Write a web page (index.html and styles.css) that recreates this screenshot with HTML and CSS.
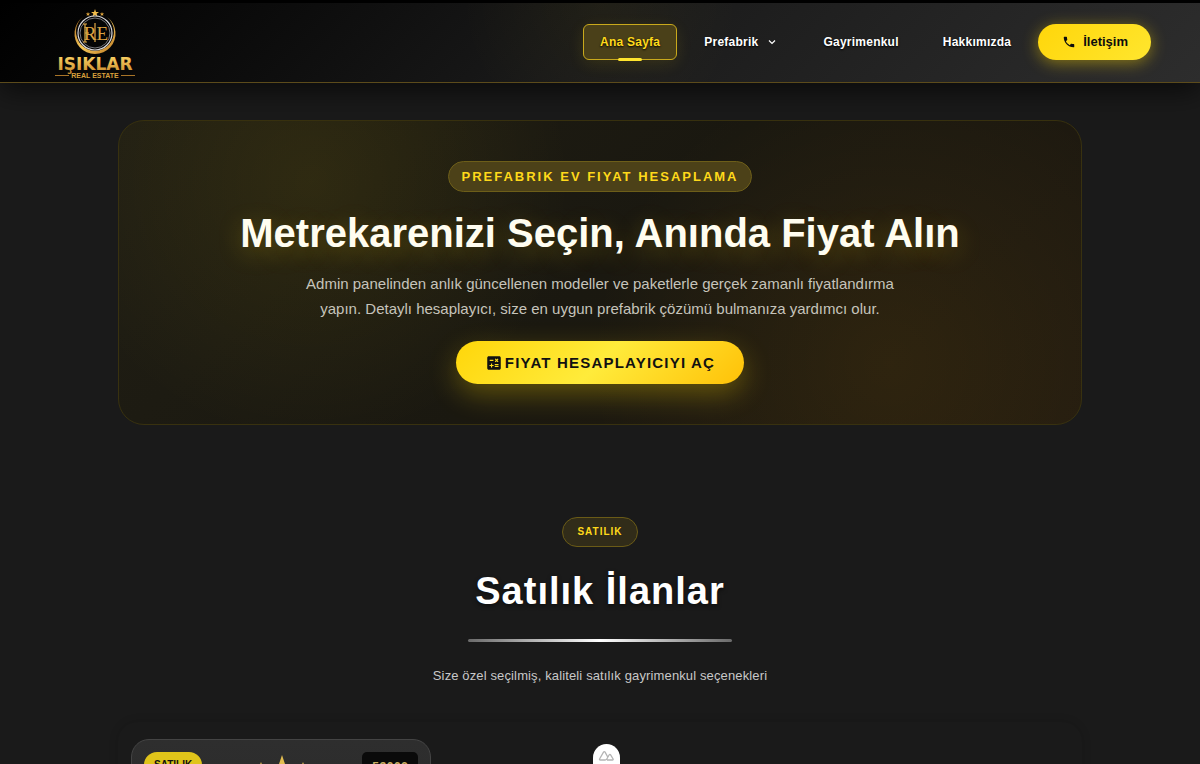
FILE: index.html
```html
<!DOCTYPE html>
<html lang="tr">
<head>
  <meta charset="UTF-8">
  <meta name="viewport" content="width=device-width, initial-scale=1.0">
  <title>Işıklar Real Estate</title>
  <link rel="stylesheet" href="styles.css">
</head>
<body>
  <header class="header">
    <a href="#" class="logo" aria-label="Işıklar Real Estate">
      <svg width="94" height="76" viewBox="0 0 94 76">
        <defs>
          <linearGradient id="gold" x1="0" y1="0" x2="1" y2="1">
            <stop offset="0" stop-color="#a8671c"/>
            <stop offset="0.5" stop-color="#f7c95a"/>
            <stop offset="1" stop-color="#b87420"/>
          </linearGradient>
          <linearGradient id="goldText" x1="0" y1="0" x2="0" y2="1">
            <stop offset="0" stop-color="#ffd96a"/>
            <stop offset="1" stop-color="#c98a2c"/>
          </linearGradient>
        </defs>
        <path fill="#f2bd4b" d="M47 5l1 3h3l-2.400 1.800 1 3-2.600-1.800-2.600 1.800 1-3L43 8h3z"/>
        <path fill="#e0a63c" d="M40 8l.6 1.500h1.600l-1.300 1 .5 1.500-1.400-.9-1.400.9.5-1.500-1.300-1h1.600zM54 8l.6 1.500h1.600l-1.300 1 .5 1.500-1.400-.9-1.400.9.5-1.500-1.300-1h1.600z"/>
        <path fill="url(#gold)" d="M35 13a20.500 20.500 0 1 0 24 0a19 19 0 1 1-24 0z"/>
        <circle cx="47" cy="29" r="17" fill="none" stroke="#d8d8dc" stroke-width="1.200"/>
        <circle cx="47" cy="29" r="15" fill="none" stroke="#77777c" stroke-width="1"/>
        <text x="48" y="36" class="logo-mono">RE</text>
        <path stroke="#e2a945" stroke-width="1.200" d="M37 20v18M35 20h4M35 38h4M37 29h4M47 19v19" fill="none"/>
        <text x="47" y="66" class="logo-name">IŞIKLAR</text>
        <text x="47" y="74" class="logo-sub">REAL ESTATE</text>
        <path stroke="#a87428" stroke-width="1" d="M7 71.500h14M73 71.500h14"/>
      </svg>
    </a>
    <nav class="nav">
      <a href="#" class="nav-link active">Ana Sayfa</a>
      <a href="#" class="nav-link">Prefabrik
        <svg class="chevron" width="14" height="14" viewBox="0 0 14 14"><path d="M4 5.500l3 3 3-3" fill="none" stroke="currentColor" stroke-width="1.200"/></svg>
      </a>
      <a href="#" class="nav-link">Gayrimenkul</a>
      <a href="#" class="nav-link">Hakkımızda</a>
      <a href="#" class="contact">
        <svg width="14" height="14" viewBox="0 0 24 24"><path fill="currentColor" d="M6.620 10.790c1.440 2.830 3.760 5.140 6.590 6.590l2.200-2.200c.27-.27.67-.36 1.020-.24 1.120.37 2.330.57 3.570.57.55 0 1 .45 1 1V20c0 .55-.45 1-1 1-9.390 0-17-7.610-17-17 0-.55.45-1 1-1h3.500c.55 0 1 .45 1 1 0 1.250.2 2.450.57 3.570.11.35.03.74-.25 1.020l-2.200 2.200z"/></svg>
        İletişim
      </a>
    </nav>
  </header>

  <main class="container">
    <section class="hero">
      <span class="hero-badge">PREFABRIK EV FIYAT HESAPLAMA</span>
      <h1>Metrekarenizi Seçin, Anında Fiyat Alın</h1>
      <p>Admin panelinden anlık güncellenen modeller ve paketlerle gerçek zamanlı fiyatlandırma yapın. Detaylı hesaplayıcı, size en uygun prefabrik çözümü bulmanıza yardımcı olur.</p>
      <button type="button" class="hero-button">
        <svg width="18" height="18" viewBox="0 0 24 24"><path fill="currentColor" fill-rule="evenodd" d="M19 3H5c-1.100 0-2 .9-2 2v14c0 1.100.9 2 2 2h14c1.100 0 2-.9 2-2V5c0-1.100-.9-2-2-2zm-5.970 4.060L14.090 6l1.410 1.410L16.910 6l1.060 1.060-1.410 1.410 1.410 1.410-1.060 1.060-1.410-1.400-1.410 1.410-1.060-1.060 1.410-1.410-1.410-1.420zM6.250 7.720h5v1.500h-5v-1.500zM11.500 16h-2v2H8v-2H6v-1.500h2v-2h1.500v2h2V16zm6.500 1.250h-5v-1.500h5v1.500zm0-2.500h-5v-1.500h5v1.500z"/></svg>
        FIYAT HESAPLAYICIYI AÇ
      </button>
    </section>

    <section class="listings">
      <span class="section-badge">SATILIK</span>
      <h2>Satılık İlanlar</h2>
      <div class="divider"></div>
      <p>Size özel seçilmiş, kaliteli satılık gayrimenkul seçenekleri</p>
      <div class="cards">
        <article class="card">
          <span class="card-tag">SATILIK</span>
          <svg class="card-logo" width="60" height="60" viewBox="0 0 60 60"><path fill="#e3bd50" d="M30 3l5 15h15L38 27l5 15-13-9-13 9 5-15-12-9h15zM9 10l2 5h5l-4 3 1 5-4-3-4 3 1-5-4-3h5zM51 10l2 5h5l-4 3 1 5-4-3-4 3 1-5-4-3h5z"/></svg>
          <span class="card-code">53662</span>
        </article>
      </div>
    </section>
  </main>

  <button type="button" class="devtools" aria-label="Devtools">
    <svg width="17" height="12" viewBox="0 0 17 12"><path d="M7 10H2.500q-1.500 0-.8-1.300L5.500 2.200q.8-1.200 1.600 0L10 7.500M7 10q1.200 0 1.800-1l2.400-4.200q.7-1 1.400 0l2.500 4.200q.4 1-.7 1H9" fill="none" stroke="#b4b4b4" stroke-width="1.300"/></svg>
  </button>
</body>
</html>
```

FILE: styles.css
```css
* {
  box-sizing: border-box;
}
body {
  margin: 0;
  height: 100vh;
  overflow: hidden;
  background: #1a1a1a;
  color: #fff;
  font-family: "Liberation Sans", Arial, sans-serif;
}
a {
  color: inherit;
  text-decoration: none;
}
.header {
  position: relative;
  display: flex;
  align-items: center;
  justify-content: space-between;
  height: 83px;
  padding: 0 49px 2px 48px;
  border-top: 3px solid #000;
  border-bottom: 1px solid #5c4b1b;
  background: radial-gradient(circle at 50% 0, rgba(255, 215, 0, 0.04), transparent 140px), linear-gradient(135deg, #000 0%, #1a1a1a 50%, #2d2d2d 100%);
  box-shadow: 0 8px 26px rgba(0, 0, 0, 0.6);
}
.logo svg {
  display: block;
}
.logo-mono {
  font: 19px "Liberation Serif", serif;
  fill: #dca242;
  text-anchor: middle;
}
.logo-name {
  font: bold 17px "DejaVu Sans", sans-serif;
  fill: url(#goldText);
  text-anchor: middle;
}
.logo-sub {
  font: bold 7px "Liberation Sans", sans-serif;
  fill: #d9a03c;
  text-anchor: middle;
}
.nav {
  display: flex;
  align-items: center;
  gap: 10px;
  font-size: 12px;
  font-weight: bold;
  letter-spacing: 0.02em;
}
.nav-link {
  display: flex;
  align-items: center;
  gap: 7px;
  height: 36px;
  padding: 0 16px;
  border: 1px solid transparent;
  border-radius: 6px;
  text-shadow: 0 1px 2px #000;
}
.nav-link.active {
  position: relative;
  color: #ffd91a;
  background: #4a4019;
  border-color: #c9a91c;
  box-shadow: 0 4px 16px rgba(255, 215, 0, 0.1);
}
.nav-link.active::after {
  content: "";
  position: absolute;
  bottom: -2px;
  left: 50%;
  width: 24px;
  height: 3px;
  margin-left: -12px;
  border-radius: 2px;
  background: #ffe52e;
}
.contact {
  display: flex;
  align-items: center;
  gap: 7px;
  height: 36px;
  padding: 0 23px 0 24px;
  border-radius: 18px;
  color: #0d0d0d;
  font-size: 13px;
  letter-spacing: 0;
  background: linear-gradient(135deg, #ffd60a, #ffe62e);
  box-shadow: 0 3px 16px rgba(255, 215, 0, 0.45);
}
.container {
  max-width: 1012px;
  margin: 0 auto;
  padding: 0 24px;
}
.hero {
  display: flex;
  flex-direction: column;
  align-items: center;
  margin-top: 37px;
  padding: 40px;
  border: 1px solid #38310f;
  border-radius: 26px;
  text-align: center;
  background:
    radial-gradient(circle at 20% 20%, rgba(255, 215, 0, 0.08), transparent 260px),
    radial-gradient(circle at 80% 80%, rgba(255, 170, 0, 0.07), transparent 300px),
    linear-gradient(135deg, #201e14, #1a1810 50%, #221b10);
}
.hero-badge {
  padding: 0 12px;
  border: 1px solid #6d5e19;
  border-radius: 16px;
  background: #4c4118;
  color: #ffd91a;
  font-size: 13px;
  font-weight: bold;
  line-height: 29px;
  letter-spacing: 2px;
}
.hero h1 {
  margin: 17px 0 14px;
  font-size: 40px;
  line-height: 48px;
  color: #fffdf0;
  text-shadow: 0 6px 24px rgba(255, 215, 0, 0.25);
}
.hero p {
  max-width: 610px;
  margin: 0 0 20px;
  color: #c6c4bb;
  font-size: 15px;
  line-height: 25px;
}
.hero-button {
  display: flex;
  align-items: center;
  gap: 2px;
  height: 43px;
  padding: 0 29px;
  border: 0;
  border-radius: 22px;
  color: #111;
  font: bold 15px "Liberation Sans", Arial, sans-serif;
  letter-spacing: 0.08em;
  background: linear-gradient(135deg, #ffd60a, #ffeb3b 50%, #ffc107);
  box-shadow: 0 10px 28px rgba(255, 215, 0, 0.3);
}
.listings {
  display: flex;
  flex-direction: column;
  align-items: center;
  margin-top: 92px;
}
.section-badge {
  padding: 0 14px;
  border: 1px solid #6a5b17;
  border-radius: 15px;
  background: #312c19;
  color: #ffd91a;
  font-size: 10px;
  font-weight: bold;
  line-height: 28px;
  letter-spacing: 1px;
}
.listings h2 {
  margin: 20px 0 24px;
  font-size: 38px;
  line-height: 48px;
  letter-spacing: 1px;
  text-shadow: 0 2px 4px rgba(0, 0, 0, 0.5);
}
.divider {
  width: 264px;
  height: 3px;
  border-radius: 2px;
  background: linear-gradient(90deg, #6a6a6a, #fff 50%, #6a6a6a);
}
.listings p {
  margin: 24px 0 36px;
  color: #c8c8c8;
  font-size: 13px;
  line-height: 20px;
  letter-spacing: 0.01em;
}
.cards {
  width: 100%;
  padding: 17px 13px;
  border-radius: 20px;
  box-shadow: 0 0 10px rgba(0, 0, 0, 0.15);
}
.card {
  display: flex;
  align-items: flex-start;
  justify-content: space-between;
  width: 300px;
  height: 300px;
  padding: 12px;
  border: 1px solid #444;
  border-radius: 18px;
  background: linear-gradient(#2e2e2e, #242424);
}
.card-tag {
  padding: 0 10px;
  border-radius: 13px;
  background: #e0c41a;
  color: #111;
  font-size: 10px;
  font-weight: bold;
  line-height: 26px;
}
.card-code {
  padding: 0 10px;
  border-radius: 5px;
  background: #0a0a0a;
  color: #c8ae62;
  font: bold 12px "Liberation Mono", monospace;
  line-height: 32px;
}
.devtools {
  position: fixed;
  bottom: -8px;
  left: 50%;
  width: 27px;
  height: 28px;
  margin-left: -7px;
  padding: 6px 0 0;
  border: 0;
  border-radius: 14px 14px 0 0;
  background: #fff;
}
.devtools svg {
  display: block;
  margin: 0 auto 10px;
}
```
